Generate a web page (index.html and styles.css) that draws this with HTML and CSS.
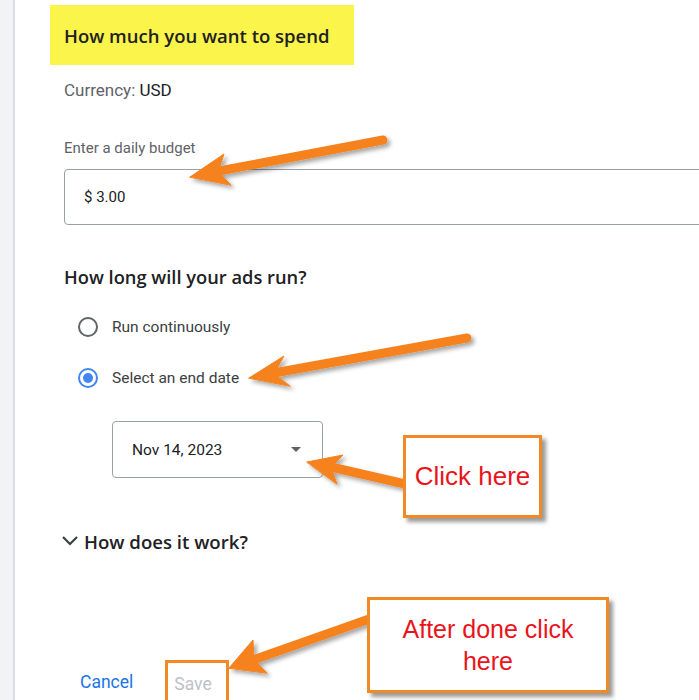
FILE: index.html
```html
<!DOCTYPE html>
<html lang="en">
<head>
    <meta charset="UTF-8">
    <title>Budget</title>
    <link rel="stylesheet" href="styles.css">
</head>
<body>
    <div class="page">
        <div class="rail"></div>
        <div class="main">
            <div class="title-box">How much you want to spend</div>
            <div class="currency">Currency: <span class="strong">USD</span></div>

            <div class="field-label">Enter a daily budget</div>
            <div class="budget-input">$ 3.00</div>

            <h2 class="section-title">How long will your ads run?</h2>

            <div class="radio-row">
                <span class="radio"></span>
                <span>Run continuously</span>
            </div>
            <div class="radio-row second">
                <span class="radio checked"></span>
                <span>Select an end date</span>
            </div>

            <div class="date-select">
                <span>Nov 14, 2023</span>
                <span class="caret"></span>
            </div>

            <div class="how-works">
                <svg width="18" height="18" viewBox="0 0 18 18"><path d="M2 5 L9 12 L16 5" fill="none" stroke="#3c4043" stroke-width="2.2"/></svg>
                <span>How does it work?</span>
            </div>

            <div class="actions">
                <button class="btn-text cancel">Cancel</button>
                <button class="btn-text save">Save</button>
            </div>
        </div>
    </div>

    <!-- annotation layer -->
    <svg class="arrows" width="699" height="700" viewBox="0 0 699 700">
        <defs>
            <filter id="shadow" x="-20%" y="-50%" width="140%" height="200%">
                <feDropShadow dx="3" dy="3" stdDeviation="2" flood-color="#000" flood-opacity="0.35"/>
            </filter>
        </defs>
        <g filter="url(#shadow)" fill="#f5821f" stroke="#f5821f" stroke-linecap="round">
            <line x1="383" y1="140" x2="214" y2="172" stroke-width="9"/>
            <polygon points="190,177 224,154 218,172 231,185" stroke-width="1"/>

            <line x1="467" y1="338" x2="274" y2="373" stroke-width="9"/>
            <polygon points="249,378 284,356 274,374 290,386" stroke-width="1"/>

            <line x1="405" y1="484" x2="331" y2="467" stroke-width="9"/>
            <polygon points="307,462 343,455 331,467 337,484" stroke-width="1"/>

            <line x1="372" y1="618" x2="253" y2="660" stroke-width="9"/>
            <polygon points="229,668 253,640 254,660 267,673" stroke-width="1"/>
        </g>
    </svg>

    <div class="callout click-here">Click here</div>
    <div class="callout after-done">After done click<br>here</div>
</body>
</html>
```

FILE: styles.css
```css
body {
    margin: 0;
    width: 699px;
    height: 700px;
    overflow: hidden;
    background: #fff;
    font-family: Roboto, "Liberation Sans", Arial, sans-serif;
    color: #3c4043;
    position: relative;
}

.page {
    display: flex;
    height: 700px;
    overflow: hidden;
}

.rail {
    width: 13px;
    flex: none;
    background: #f1f3f4;
    border-right: 2px solid #dadce0;
}

.main {
    flex: 1;
    min-width: 0;
    padding: 5px 0 0 49px;
    display: flex;
    flex-direction: column;
    align-items: flex-start;
}

.title-box {
    margin-left: -14px;
    width: 276px;
    height: 60px;
    padding: 0 14px;
    display: flex;
    align-items: center;
    background: #fbf44a;
    font-family: "Open Sans", Roboto, sans-serif;
    font-size: 18.5px;
    font-weight: 600;
    color: #202124;
    white-space: nowrap;
}

.currency {
    margin-top: 15px;
    font-size: 17px;
    line-height: 20px;
    color: #5f6368;
}

.strong {
    color: #202124;
}

.field-label {
    margin-top: 39px;
    font-size: 15px;
    line-height: 18px;
    color: #5f6368;
}

.budget-input {
    margin-top: 12px;
    width: 700px;
    height: 54px;
    padding-left: 19px;
    display: flex;
    align-items: center;
    border: 1px solid #9aa0a6;
    border-radius: 4px;
    font-size: 15px;
    color: #202124;
}

.section-title {
    margin: 40px 0 0;
    font-family: "Open Sans", Roboto, sans-serif;
    font-size: 18.3px;
    font-weight: 600;
    line-height: 24px;
    color: #202124;
}

.radio-row {
    margin-top: 26px;
    height: 24px;
    display: flex;
    align-items: center;
    gap: 14px;
    padding-left: 14px;
    font-size: 15.5px;
    color: #3c4043;
}

.radio-row.second {
    margin-top: 27px;
}

.radio {
    width: 20px;
    height: 20px;
    box-sizing: border-box;
    border: 2px solid #5f6368;
    border-radius: 50%;
    position: relative;
}

.radio.checked {
    border-color: #4285f4;
}

.radio.checked::after {
    content: "";
    position: absolute;
    left: 3px;
    top: 3px;
    width: 10px;
    height: 10px;
    border-radius: 50%;
    background: #4285f4;
}

.date-select {
    margin: 31px 0 0 48px;
    width: 169px;
    height: 55px;
    padding: 0 21px 0 19px;
    display: flex;
    align-items: center;
    justify-content: space-between;
    border: 1px solid #9aa0a6;
    border-radius: 4px;
    font-size: 15.5px;
    color: #202124;
}

.caret {
    width: 0;
    height: 0;
    border-left: 5px solid transparent;
    border-right: 5px solid transparent;
    border-top: 5px solid #5f6368;
}

.how-works {
    margin: 51px 0 0 -3px;
    height: 24px;
    display: flex;
    align-items: center;
    gap: 5px;
    font-family: "Open Sans", Roboto, sans-serif;
    font-size: 18.6px;
    font-weight: 600;
    color: #202124;
}

.actions {
    margin-top: 107px;
    height: 40px;
    display: flex;
    align-items: center;
    gap: 32px;
}

.btn-text {
    font-family: Roboto, "Liberation Sans", Arial, sans-serif;
    font-size: 17.5px;
    background: none;
    border: none;
    padding: 0 0 0 16px;
    cursor: pointer;
}

.cancel {
    color: #1a73e8;
    margin-top: 4px;
}

.save {
    color: #bdc1c6;
    height: 40px;
    padding: 4px 14px 0 6px;
    border: 3px solid #f08a24;
    border-bottom: none;
}

.arrows {
    position: absolute;
    left: 0;
    top: 0;
}

.callout {
    position: absolute;
    box-sizing: border-box;
    background: #fff;
    border: 3px solid #f08a24;
    box-shadow: 4px 4px 4px rgba(0, 0, 0, 0.4);
    font-family: "Liberation Sans", Arial, sans-serif;
    color: #e8141b;
    text-align: center;
    display: flex;
    align-items: center;
    justify-content: center;
}

.click-here {
    left: 403px;
    top: 435px;
    width: 139px;
    height: 83px;
    font-size: 26px;
}

.after-done {
    left: 367px;
    top: 597px;
    width: 242px;
    height: 96px;
    font-size: 25px;
    line-height: 32px;
}
```
